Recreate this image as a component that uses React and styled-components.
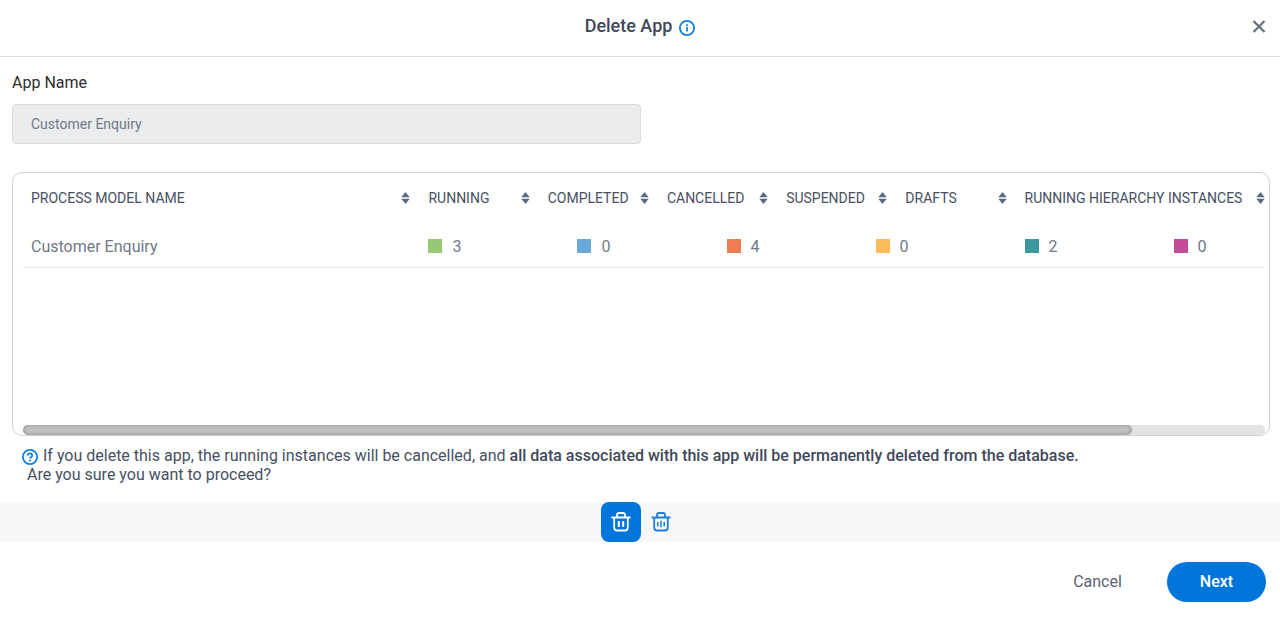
import React from 'react';
import styled, { createGlobalStyle } from 'styled-components';

const GlobalStyle = createGlobalStyle`
    *, *::before, *::after {
        box-sizing: border-box;
    }
    body {
        margin: 0;
        background-color: #ffffff;
        color: #475063;
        font-family: Roboto, "Liberation Sans", sans-serif;
        font-size: 16px;
    }
    button, input {
        font-family: inherit;
    }
`;

const Dialog = styled.section`
    display: flex;
    flex-direction: column;
`;

// Dialog header with centered title
const Header = styled.header`
    display: grid;
    grid-template-columns: 1fr auto 1fr;
    align-items: center;
    height: 57px;
    padding: 0 12px 4px;
    border-bottom: 1px solid #dcdcde;
`;

const Title = styled.h1`
    grid-column: 2;
    display: flex;
    align-items: center;
    gap: 7px;
    margin: 0;
    font-size: 18px;
    font-weight: 500;
    line-height: 24px;
    color: #3f485a;
    svg {
        margin-top: 3px;
    }
`;

const CloseButton = styled.button`
    justify-self: end;
    display: flex;
    padding: 2px;
    border: none;
    background: none;
    color: #65707f;
    cursor: pointer;
`;

const Body = styled.main`
    display: flex;
    flex-direction: column;
    padding: 14px 10px 0 12px;
`;

const Field = styled.div`
    display: flex;
    flex-direction: column;
    gap: 9px;
    width: 50%;
    margin-bottom: 28px;
`;

const Label = styled.label`
    line-height: 24px;
    color: #2d2d2f;
`;

const TextInput = styled.input`
    width: 100%;
    height: 40px;
    padding: 0 18px;
    border: 1px solid #d9dbdf;
    border-radius: 4px;
    background-color: #ebecee;
    color: #717989;
    font-size: 14px;
`;

// Bordered panel around the table
const Panel = styled.div`
    display: flex;
    flex-direction: column;
    justify-content: space-between;
    min-height: 264px;
    padding: 0 4px 0 10px;
    border: 1px solid #cdd1da;
    border-radius: 10px;
`;

const TableView = styled.div`
    overflow: hidden;
`;

const Table = styled.table`
    display: block;
    width: 100%;
    thead, tbody {
        display: block;
    }
`;

const HeadRow = styled.tr`
    display: grid;
    grid-template-columns: 40fr repeat(5, 12fr) 25fr;
    height: 50px;
`;

const HeadCell = styled.th`
    display: flex;
    align-items: center;
    justify-content: space-between;
    min-width: 0;
    padding: 0 10px 0 8px;
    font-size: 14px;
    font-weight: 400;
    white-space: nowrap;
    &:last-child {
        padding-right: 0;
    }
`;

const SortButton = styled.button`
    display: flex;
    padding: 0;
    border: none;
    background: none;
    color: #5b6b82;
    cursor: pointer;
`;

const Row = styled.tr`
    display: grid;
    grid-template-columns: 32% repeat(6, 12%);
    height: 45px;
    border-bottom: 1px solid #e6e6e9;
`;

const Cell = styled.td`
    display: flex;
    align-items: center;
    gap: 10px;
    padding: 2px 8px 0;
    color: #717989;
`;

const Swatch = styled.span`
    width: 14px;
    height: 14px;
    margin-bottom: 1px;
    background-color: ${({ $color }) => $color};
`;

const ScrollTrack = styled.div`
    height: 10px;
    border-radius: 5px;
    background-color: #e3e3e3;
`;

const ScrollThumb = styled.div`
    width: ${({ $size }) => $size}%;
    height: 100%;
    border-radius: 5px;
    background-color: #c3c3c3;
    box-shadow: inset 0 0 4px rgba(0, 0, 0, 0.3);
`;

const Warning = styled.div`
    padding: 10px 10px 18px;
    line-height: 19px;
    p {
        margin: 0;
    }
    strong {
        font-weight: 500;
        color: #3f485a;
    }
`;

const WarningLine = styled.p`
    display: flex;
    gap: 5px;
    svg {
        flex: none;
        margin-top: 3px;
    }
`;

const Question = styled.p`
    padding-left: 5px;
`;

// Strip with the delete modes
const ModeBar = styled.div`
    display: flex;
    justify-content: center;
    height: 40px;
    padding-left: 2px;
    background-color: #f8f8fb;
`;

const ModeButton = styled.button`
    display: flex;
    align-items: center;
    justify-content: center;
    width: 40px;
    height: 40px;
    padding: 0;
    border: none;
    border-radius: 8px;
    background-color: ${({ $active }) => ($active ? '#0076db' : 'transparent')};
    color: ${({ $active }) => ($active ? '#ffffff' : '#1b7fd6')};
    cursor: pointer;
`;

const Footer = styled.footer`
    display: flex;
    justify-content: flex-end;
    gap: 20px;
    padding: 20px 14px 15px;
`;

const Button = styled.button`
    height: 40px;
    min-width: 99px;
    padding: 0 24px 2px;
    border: none;
    border-radius: 20px;
    background-color: ${({ $primary }) => ($primary ? '#0076db' : 'transparent')};
    color: ${({ $primary }) => ($primary ? '#ffffff' : '#596173')};
    font-size: 16px;
    font-weight: ${({ $primary }) => ($primary ? 500 : 400)};
    cursor: pointer;
`;

const InfoIcon = () => (
    <svg width="16" height="16" viewBox="0 0 16 16" fill="none" stroke="#0f7fe0" strokeWidth="1.8" aria-hidden="true">
        <circle cx="8" cy="8" r="7.1" />
        <path d="M8 7v4.500M8 4.200v1.800" />
    </svg>
);

const HelpIcon = () => (
    <svg width="16" height="16" viewBox="0 0 16 16" fill="none" stroke="#0f7fe0" strokeWidth="1.8" aria-hidden="true">
        <circle cx="8" cy="8" r="7.1" />
        <path d="M5.8 6.500c0-1.300 1-2.100 2.200-2.100s2.200.8 2.200 2c0 1.500-2.200 1.500-2.200 3M8 10.800v1.600" />
    </svg>
);

const CloseIcon = () => (
    <svg width="14" height="14" viewBox="0 0 14 14" fill="none" stroke="currentColor" strokeWidth="2.2" aria-hidden="true">
        <path d="M1.500 2l11 11M12.500 2l-11 11" />
    </svg>
);

const SortIcon = () => (
    <svg width="9" height="12" viewBox="0 0 9 12" fill="currentColor" aria-hidden="true">
        <path d="M4.500 0L8.700 5.200H.3zM4.500 12L.3 6.800h8.400z" />
    </svg>
);

const TrashIcon = ({ children }) => (
    <svg width="20" height="20" viewBox="0 0 20 20" fill="none" stroke="currentColor" strokeWidth="1.8" aria-hidden="true">
        <path d="M.5 5.500h19M6 5V3.200Q6 1 8.200 1h3.600Q14 1 14 3.200V5" />
        <path d="M3.200 5.500V15.500q0 3 3 3h7.600q3 0 3-3V5.500" />
        {children}
    </svg>
);

const columns = [
    'PROCESS MODEL NAME',
    'RUNNING',
    'COMPLETED',
    'CANCELLED',
    'SUSPENDED',
    'DRAFTS',
    'RUNNING HIERARCHY INSTANCES',
];

const models = [
    {
        name: 'Customer Enquiry',
        counts: [
            { value: 3, color: '#97c873' },
            { value: 0, color: '#69a8d9' },
            { value: 4, color: '#f17c51' },
            { value: 0, color: '#fdbc5b' },
            { value: 2, color: '#3a979b' },
            { value: 0, color: '#c44b98' },
        ],
    },
];

// Table of process models with instance counts
const ModelTable = () => (
    <Panel>
        <TableView>
            <Table cellSpacing="0">
                <thead>
                    <HeadRow>
                        {columns.map((column) => (
                            <HeadCell key={column} scope="col">
                                {column}
                                <SortButton type="button" aria-label={`Sort by ${column}`}>
                                    <SortIcon />
                                </SortButton>
                            </HeadCell>
                        ))}
                    </HeadRow>
                </thead>
                <tbody>
                    {models.map((model) => (
                        <Row key={model.name}>
                            <Cell>{model.name}</Cell>
                            {model.counts.map((count) => (
                                <Cell key={count.color}>
                                    <Swatch $color={count.color} />
                                    {count.value}
                                </Cell>
                            ))}
                        </Row>
                    ))}
                </tbody>
            </Table>
        </TableView>
        <ScrollTrack>
            <ScrollThumb $size={89.3} />
        </ScrollTrack>
    </Panel>
);

const App = () => {
    return (
        <>
            <GlobalStyle />
            <Dialog aria-labelledby="dialog-title">
                <Header>
                    <Title id="dialog-title">
                        Delete App
                        <InfoIcon />
                    </Title>
                    <CloseButton type="button" aria-label="Close">
                        <CloseIcon />
                    </CloseButton>
                </Header>
                <Body>
                    <Field>
                        <Label htmlFor="app-name">App Name</Label>
                        <TextInput id="app-name" type="text" defaultValue="Customer Enquiry" disabled />
                    </Field>
                    <ModelTable />
                    <Warning>
                        <WarningLine>
                            <HelpIcon />
                            <span>
                                If you delete this app, the running instances will be cancelled, and{' '}
                                <strong>all data associated with this app will be permanently deleted from the database.</strong>
                            </span>
                        </WarningLine>
                        <Question>Are you sure you want to proceed?</Question>
                    </Warning>
                </Body>
                {/* Delete mode switch */}
                <ModeBar>
                    <ModeButton type="button" $active aria-label="Delete app">
                        <TrashIcon>
                            <path d="M7.800 9v6M12.200 9v6" strokeWidth="2" />
                        </TrashIcon>
                    </ModeButton>
                    <ModeButton type="button" aria-label="Delete app and data">
                        <TrashIcon>
                            <path d="M6.800 10v4.500M10 8.800v6.500M13.200 10v4.500" strokeWidth="1.500" />
                        </TrashIcon>
                    </ModeButton>
                </ModeBar>
                <Footer>
                    <Button type="button">Cancel</Button>
                    <Button type="button" $primary>Next</Button>
                </Footer>
            </Dialog>
        </>
    );
};

export default App;
